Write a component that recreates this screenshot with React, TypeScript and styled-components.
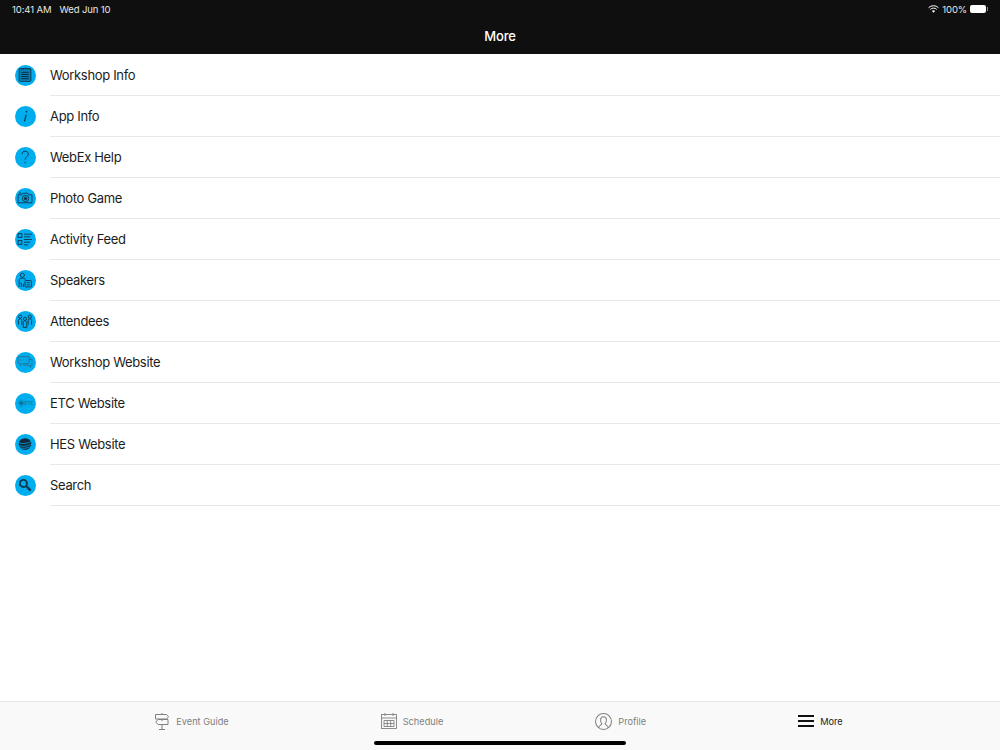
import { ReactNode } from "react";
import styled, { createGlobalStyle } from "styled-components";

const GlobalStyle = createGlobalStyle`
  html, body {
    margin: 0;
    padding: 0;
    background: #fff;
    font-family: Inter, "Liberation Sans", sans-serif;
  }
`;

const Page = styled.div`
  width: 1000px;
  height: 750px;
  display: flex;
  flex-direction: column;
  position: relative;
  overflow: hidden;
  background: #fff;
`;

const Header = styled.header`
  height: 54px;
  flex: none;
  background: #0f0f0f;
  color: #fff;
  display: flex;
  flex-direction: column;
  box-sizing: border-box;
  padding: 0 12px 0 12px;
`;

const StatusBar = styled.div`
  height: 18px;
  display: flex;
  align-items: center;
  justify-content: space-between;
  font-size: 9.5px;
  letter-spacing: -0.1px;
  color: #e8e8e8;
`;

const StatusGroup = styled.div<{ $gap: number }>`
  display: flex;
  align-items: center;
  gap: ${(p) => p.$gap}px;
`;

const Battery = styled.span`
  width: 16px;
  height: 8px;
  border-radius: 2px;
  background: #fff;
  margin-right: 2px;
  position: relative;
  &::after {
    content: "";
    position: absolute;
    right: -2px;
    top: 2px;
    width: 1px;
    height: 4px;
    background: #888;
  }
`;

const Title = styled.div`
  text-align: center;
  font-size: 13px;
  font-weight: 500;
  letter-spacing: -0.1px;
  line-height: 16px;
  margin-top: 10px;
`;

const List = styled.main`
  flex: 1;
  padding-top: 1px;
`;

const Row = styled.div`
  height: 41px;
  display: flex;
  align-items: center;
  padding-left: 15px;
`;

const Badge = styled.span`
  width: 21px;
  height: 21px;
  flex: none;
  border-radius: 50%;
  background: #00aeef;
  display: flex;
  align-items: center;
  justify-content: center;
  margin-top: -1px;
  margin-left: -0.5px;
`;

const RowBody = styled.div`
  flex: 1;
  height: 100%;
  margin-left: 14.5px;
  display: flex;
  align-items: center;
  box-sizing: border-box;
  border-bottom: 1px solid #e8e8e8;
  font-size: 13px;
  letter-spacing: -0.33px;
  color: #1c1c1c;
  padding-bottom: 1px;
`;

const TabBar = styled.nav`
  height: 49px;
  flex: none;
  box-sizing: border-box;
  border-top: 1px solid #e8e8e8;
  background: #f9f9f9;
  display: flex;
  justify-content: center;
  gap: 152px;
  padding: 9px 2px 0 0;
`;

const Tab = styled.div<{ $active?: boolean }>`
  height: 20px;
  display: flex;
  align-items: center;
  gap: 6px;
  font-size: 9.2px;
  color: ${(p) => (p.$active ? "#222" : "#808080")};
`;

const HomeIndicator = styled.div`
  position: absolute;
  left: 374px;
  bottom: 5px;
  width: 252px;
  height: 4px;
  border-radius: 2px;
  background: #000;
`;

const Glyph = ({ children }: { children: ReactNode }) => (
  <svg width="16" height="16" viewBox="0 0 15 15" fill="none" stroke="#10384f" strokeWidth=".9">
    {children}
  </svg>
);

const rows: { label: string; icon: ReactNode }[] = [
  {
    label: "Workshop Info",
    icon: (
      <Glyph>
        <rect x="2" y="1.500" width="11" height="12" rx="1" fill="#0b7fb3" />
        <path d="M4 1v1.500M6 1v1.500M8 1v1.500M10 1v1.500M12 1v1.500" />
        <path d="M4 5h7M4 7h7M4 9h7M4 11h7" stroke="#072c40" />
      </Glyph>
    ),
  },
  {
    label: "App Info",
    icon: (
      <Glyph>
        <path d="M8.600 6.200 7 12.600" strokeWidth="1.200" />
        <circle cx="8.900" cy="3.400" r=".8" fill="#10384f" stroke="none" />
      </Glyph>
    ),
  },
  {
    label: "WebEx Help",
    icon: (
      <Glyph>
        <path d="M4.600 4.800c0-3.600 6-3.600 6 0 0 2.400-3 2.400-3 5" />
        <circle cx="7.600" cy="12.600" r=".7" fill="#10384f" stroke="none" />
      </Glyph>
    ),
  },
  {
    label: "Photo Game",
    icon: (
      <Glyph>
        <path d="M1 4.500h3.500l1-1.500h4.500l1 1.500h3V12H1z" />
        <circle cx="8" cy="8" r="3" />
        <circle cx="8" cy="8" r="1.300" fill="#10384f" />
        <path d="M2 2.800h2" />
      </Glyph>
    ),
  },
  {
    label: "Activity Feed",
    icon: (
      <Glyph>
        <rect x="1" y="2.500" width="3.500" height="3.500" />
        <rect x="1" y="9" width="3.500" height="3.500" />
        <path d="M6.500 3h7.500M6.500 5.500h6M6.500 8h7.500M6.500 10.500h6M6.500 13h4" />
      </Glyph>
    ),
  },
  {
    label: "Speakers",
    icon: (
      <Glyph>
        <circle cx="5" cy="3" r="1.900" />
        <path d="M2 14V8c0-1.500 1-2.300 3-2.300S8 6.500 8 7.500M4 14v-4M6 14v-3" />
        <rect x="7.500" y="8" width="6" height="6" rx=".6" />
        <path d="M9 10h3M9 12h3" />
      </Glyph>
    ),
  },
  {
    label: "Attendees",
    icon: (
      <Glyph>
        <circle cx="7.500" cy="5.500" r="1.500" />
        <circle cx="3" cy="3.500" r="1.500" />
        <circle cx="12" cy="3.500" r="1.500" />
        <path d="M5.800 13.500V9c0-1 .7-1.700 1.700-1.700S9.200 8 9.200 9v4.500zM1.300 11V7c0-1 .7-1.500 1.700-1.500S4.500 6 4.500 7v4M10.500 11V7c0-1 .5-1.500 1.500-1.500s1.700.5 1.700 1.500v4" />
      </Glyph>
    ),
  },
  {
    label: "Workshop Website",
    icon: (
      <Glyph>
        <path d="M2 2.500h8.500a1 1 0 0 1 1 1v4.500a1 1 0 0 1-1 1H5l-2 2v-2H2a1 1 0 0 1-1-1V3.500a1 1 0 0 1 1-1z" stroke="#2a6f92" />
        <path d="M11.500 5H14v5.500h-1.500v2l-2-2H6" stroke="#2a6f92" />
        <path d="M3 5.700h1M5.700 5.700h1M8.500 5.700h1" stroke="#2a6f92" />
      </Glyph>
    ),
  },
  {
    label: "ETC Website",
    icon: (
      <Glyph>
        <circle cx="4" cy="7.500" r="1.700" fill="#0d6f9e" stroke="none" />
        <path d="M4 3.500v8M1 7.500h6" stroke="#0d6f9e" strokeWidth=".6" />
        <path d="M2.500 5v5M5.500 5v5" stroke="#0d6f9e" strokeWidth=".6" />
        <text x="7" y="9.300" fontSize="4.600" fontFamily="Inter, sans-serif" fontWeight="600" fill="#1d6f99" stroke="none">ETC</text>
      </Glyph>
    ),
  },
  {
    label: "HES Website",
    icon: (
      <Glyph>
        <ellipse cx="7.500" cy="7.500" rx="6" ry="5.500" fill="#10283a" stroke="none" />
        <path d="M1 6.200c4 1.500 9 1 13-1.500M1 8.800c4 1.500 9 1 13-1.500M2 11c4 1 8 .5 11-1" stroke="#00aeef" strokeWidth=".7" />
      </Glyph>
    ),
  },
  {
    label: "Search",
    icon: (
      <Glyph>
        <circle cx="6" cy="6" r="3.300" strokeWidth="1.800" />
        <path d="m8.800 8.800 4 4" strokeWidth="2.200" />
      </Glyph>
    ),
  },
];

export default function App() {
  return (
    <Page>
      <GlobalStyle />
      <Header>
        <StatusBar>
          <StatusGroup $gap={8}>
            <span>10:41 AM</span>
            <span>Wed Jun 10</span>
          </StatusGroup>
          <StatusGroup $gap={3}>
            <svg width="11" height="8" viewBox="0 0 11 8" fill="none" stroke="#fff">
              <path d="M.6 2.700a7 7 0 0 1 9.800 0M2.300 4.400a4.600 4.600 0 0 1 6.400 0" />
              <path d="M5.500 7.800 3.900 6a2.300 2.300 0 0 1 3.200 0z" fill="#fff" stroke="none" />
            </svg>
            <span>100%</span>
            <Battery />
          </StatusGroup>
        </StatusBar>
        <Title>More</Title>
      </Header>

      <List>
        {rows.map((row) => (
          <Row key={row.label}>
            <Badge>{row.icon}</Badge>
            <RowBody>{row.label}</RowBody>
          </Row>
        ))}
      </List>

      <TabBar>
        <Tab>
          <svg width="15" height="17" viewBox="0 0 15 17" fill="none" stroke="#808080">
            <path d="M7 0v1.500M7 6v2M7 11.500V16M4 16.500h6" />
            <path d="M.5 1.500h11l2 2.200-2 2.300H.5zM13 6.500H3L.8 9 3 11.500h10z" />
          </svg>
          Event Guide
        </Tab>
        <Tab>
          <svg width="16" height="16" viewBox="0 0 16 16" fill="none" stroke="#808080" strokeWidth=".9">
            <rect x=".5" y="1.500" width="15" height="14" />
            <path d="M.5 5h15M3 7.500h10v6H3zM3 10.500h10M6.300 7.500v6M9.700 7.500v6M4 0v3M12 0v3" />
          </svg>
          Schedule
        </Tab>
        <Tab>
          <svg width="17" height="17" viewBox="0 0 16 16" fill="none" stroke="#808080" strokeWidth=".95">
            <circle cx="8" cy="8" r="7.500" />
            <path d="M3.500 14c0-2.500 2.800-2.500 3-4-1.800-1.500-2-6.500 1.500-6.500s3.300 5 1.500 6.500c.2 1.500 3 1.500 3 4" />
          </svg>
          Profile
        </Tab>
        <Tab $active>
          <svg width="16" height="12" viewBox="0 0 16 12" fill="none" stroke="#111" strokeWidth="2">
            <path d="M0 1h16M0 6h16M0 11h16" />
          </svg>
          More
        </Tab>
      </TabBar>
      <HomeIndicator />
    </Page>
  );
}
